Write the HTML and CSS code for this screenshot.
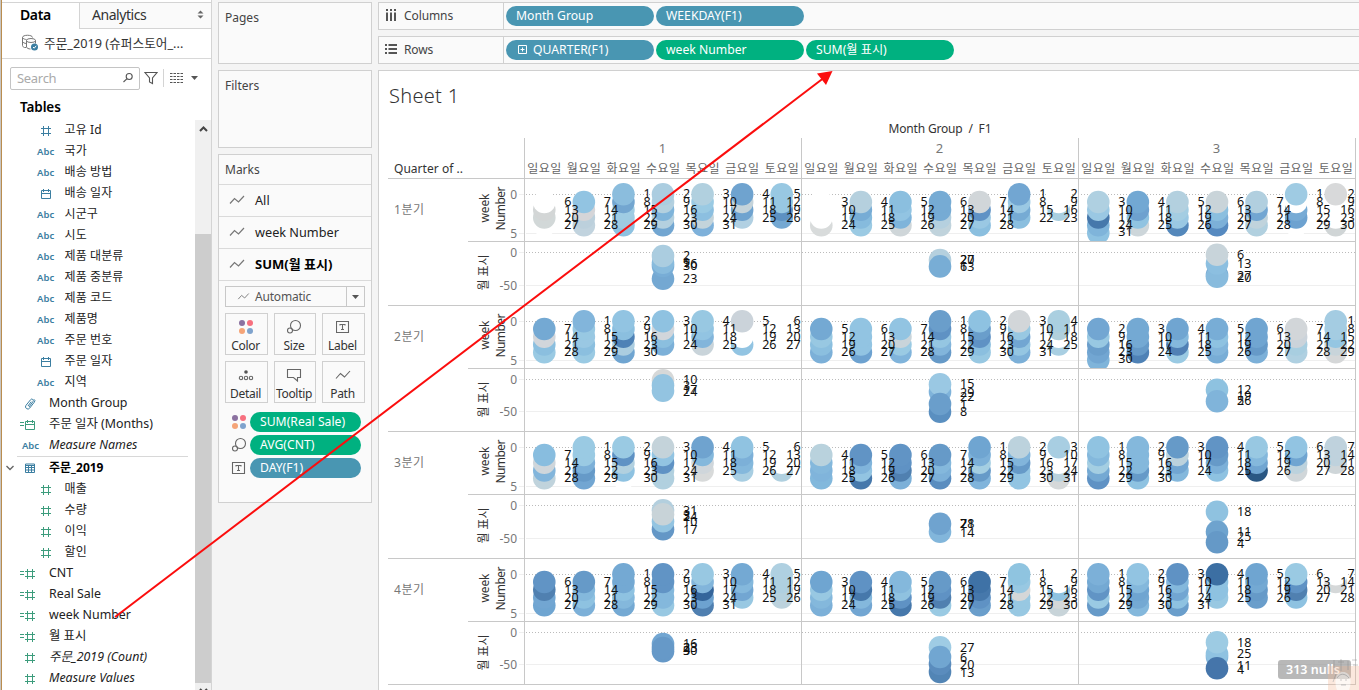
FILE: index.html
```html
<!DOCTYPE html>
<html lang="ko">
<head>
<meta charset="utf-8">
<title>Sheet 1</title>
<link rel="stylesheet" href="styles.css">
</head>
<body>
<svg class="defs" width="0" height="0">
  <symbol id="hash" viewBox="0 0 12 12"><path d="M3.500 1v10M8.500 1v10M1 3.500h10M1 8.500h10"/></symbol>
  <symbol id="cal" viewBox="0 0 12 12"><path d="M1.500 2.500h9v8h-9zM1.500 5.500h9M3.500 1v3M8.500 1v3"/></symbol>
  <symbol id="clip" viewBox="0 0 12 12"><path d="M5 9l4-5.500a1.500 1.500 0 0 0-2.400-1.800L2 7.300a2.300 2.300 0 0 0 3.700 2.800L10.300 4.200a2 2 0 0 0-.5-3M4 8l3.200-4.300"/></symbol>
  <symbol id="table" viewBox="0 0 12 12"><path d="M1.500 2h9v8.500h-9zM1.500 3.500h9M1.500 5.500h9M1.500 8h9M4.500 4v6M7.500 4v6"/></symbol>
  <symbol id="line" viewBox="0 0 16 12"><path d="M1 9.500l4.500-5 4 3.500L15 2"/></symbol>
  <symbol id="size" viewBox="0 0 16 16"><circle cx="9.500" cy="6.500" r="5"/><circle cx="4" cy="11.500" r="2.500"/></symbol>
  <symbol id="label" viewBox="0 0 14 14"><path d="M.5 1.500h12v11H.5zM4 5.500v-1h5v1M6.500 4.500v5M5 9.500h3"/></symbol>
  <symbol id="dots" viewBox="0 0 16 16"><circle cx="4" cy="4" r="3" fill="#8b71a0"/><circle cx="12" cy="4" r="3" fill="#f7707f"/><circle cx="4" cy="12" r="3" fill="#f5a478"/><circle cx="12" cy="12" r="3" fill="#7fa3cd"/></symbol>
</svg>

<div class="app">
  <aside class="data-pane">
    <div class="tabs">
      <div class="tab active">Data</div>
      <div class="tab"><span>Analytics</span>
        <svg width="7" height="9" viewBox="0 0 7 9"><path d="M.5 3.500L3.500.5l3 3zM.5 5.500l3 3 3-3z" fill="#666"/></svg>
      </div>
    </div>
    <div class="source">
      <svg width="18" height="18" viewBox="0 0 18 18" fill="none" stroke="#777"><path d="M5 13.500H3.500c-1-.3-2-1-2-2v-8c0-3 10-3 10 0M1.500 3.500c.5 1.500 3 2 4 2M1.500 7.500c.5 1 2 2 4 2"/><ellipse cx="10" cy="6.500" rx="4.500" ry="2"/><path d="M5.500 6.500v6.500c0 1 2 2 4 2M14.500 6.500v3"/><circle cx="13.500" cy="13" r="3.500" fill="#3b7ea1" stroke="none"/><path d="M12 13l1.200 1.200 2-2.400" stroke="#fff"/></svg>
      <span>주문_2019 (슈퍼스토어_...</span>
    </div>
    <div class="search-row">
      <div class="search"><span>Search</span>
        <svg width="12" height="12" viewBox="0 0 12 12" fill="none" stroke="#555" stroke-width="1.100"><circle cx="7.200" cy="4.500" r="3"/><path d="M4.800 6.800L1.500 10"/></svg>
      </div>
      <svg width="14" height="14" viewBox="0 0 14 14" fill="none" stroke="#555" stroke-width="1.100"><path d="M1 1.500h12L8.500 7v5.500l-3-1.500V7z"/></svg>
      <i class="rule"></i>
      <svg width="13" height="10" viewBox="0 0 13 10" stroke="#555" stroke-dasharray="2.500 1"><path d="M0 .5h13M0 3.500h13M0 6.500h13M0 9.500h13"/></svg>
      <svg class="caret" width="7" height="4" viewBox="0 0 7 4"><path d="M0 0h7L3.500 4z" fill="#555"/></svg>
    </div>
    <div class="tables-title">Tables</div>
    <div class="fields">
      <div class="field-list" id="fields"></div>
      <div class="scroll">
        <svg width="9" height="6" viewBox="0 0 9 6" fill="none" stroke="#444" stroke-width="2"><path d="M1 5l3.500-3.500L8 5"/></svg>
        <div class="thumb"></div>
        <svg class="down" width="9" height="6" viewBox="0 0 9 6" fill="none" stroke="#444" stroke-width="2"><path d="M1 1l3.500 3.500L8 1"/></svg>
      </div>
    </div>
  </aside>

  <section class="cards">
    <div class="card pages">Pages</div>
    <div class="card filters">Filters</div>
    <div class="card marks">
      <div class="marks-title">Marks</div>
      <div class="mark-row"><svg width="16" height="12"><use href="#line"/></svg>All</div>
      <div class="mark-row"><svg width="16" height="12"><use href="#line"/></svg>week Number</div>
      <div class="mark-row bold"><svg width="16" height="12"><use href="#line"/></svg>SUM(월 표시)</div>
      <div class="mark-body">
        <div class="select"><svg width="13" height="9"><use href="#line"/></svg><span>Automatic</span><i><svg width="7" height="4" viewBox="0 0 7 4"><path d="M0 0h7L3.500 4z" fill="#555"/></svg></i></div>
        <div class="buttons">
          <div class="button"><svg width="16" height="16"><use href="#dots"/></svg>Color</div>
          <div class="button"><svg class="st" width="16" height="16"><use href="#size"/></svg>Size</div>
          <div class="button"><svg class="st" width="14" height="16"><use href="#label"/></svg>Label</div>
          <div class="button"><svg class="st" width="16" height="16" viewBox="0 0 16 16"><circle cx="8" cy="5" r="1.800" fill="#555" stroke="none"/><circle cx="3" cy="11" r="1.700"/><circle cx="8" cy="11" r="1.700"/><circle cx="13" cy="11" r="1.700"/></svg>Detail</div>
          <div class="button"><svg class="st" width="16" height="16" viewBox="0 0 16 16"><path d="M1.500 2.500h13v8h-3v3.500l-4-3.500h-6z"/></svg>Tooltip</div>
          <div class="button"><svg class="st" width="16" height="16"><use href="#line"/></svg>Path</div>
        </div>
        <div class="enc"><svg width="16" height="16"><use href="#dots"/></svg><span class="pill green">SUM(Real Sale)</span></div>
        <div class="enc"><svg class="st" width="16" height="16"><use href="#size"/></svg><span class="pill green">AVG(CNT)</span></div>
        <div class="enc"><svg class="st" width="14" height="14"><use href="#label"/></svg><span class="pill blue">DAY(F1)</span></div>
      </div>
    </div>
  </section>

  <main class="work">
    <div class="shelf">
      <div class="shelf-name"><svg width="12" height="13" viewBox="0 0 12 13" fill="#555"><path d="M1 0h2v2H1zM5 0h2v2H5zM9 0h2v2H9zM1 3.500h2V12H1zM5 3.500h2V12H5zM9 3.500h2V12H9z"/></svg>Columns</div>
      <div class="pills"><span class="pill blue">Month Group</span><span class="pill blue">WEEKDAY(F1)</span></div>
    </div>
    <div class="shelf">
      <div class="shelf-name"><svg width="12" height="13" viewBox="0 0 12 13" fill="#555"><path d="M0 1h2v2H0zM0 5h2v2H0zM0 9h2v2H0zM3.500 1H12v2H3.500zM3.500 5H12v2H3.500zM3.500 9H12v2H3.500z"/></svg>Rows</div>
      <div class="pills"><span class="pill blue plus"><svg width="9" height="9" viewBox="0 0 9 9" fill="none" stroke="#fff"><path d="M.5.5h8v8h-8zM2.500 4.500h4M4.500 2.500v4"/></svg>QUARTER(F1)</span><span class="pill green">week Number</span><span class="pill green">SUM(월 표시)</span></div>
    </div>
    <div class="sheet">
      <h1>Sheet 1</h1>
      <svg class="chart" id="chart" width="979" height="572" viewBox="379 118 979 572"></svg>
    </div>
  </main>
</div>

<svg class="arrow" width="1359" height="690" viewBox="0 0 1359 690"><path d="M115 617L823 78.500" stroke="#fb0d0d" stroke-width="2"/><path d="M832.500 71L826 85 817 73.500z" fill="#fb0d0d"/></svg>
<div class="nulls">313 nulls</div>
<svg class="stamp" width="31" height="32" viewBox="0 0 31 32"><path d="M0 8h31v24H0z" fill="#f3b690" opacity=".5"/><path d="M9 32c-3-8-2-18 6-18s9 10 6 18z" fill="#fff" opacity=".7"/><path d="M6 2v8M10 4h6M13 1v12M20 3v9M24 2h5M25 7h5M9 20c3-5 8-5 12 0M12 22h2M17 22h2M13 27h5M8 16l-3 8" fill="none" stroke="#888" opacity=".7"/></svg>
<script src="app.js"></script>
</body>
</html>
```

FILE: styles.css
```css
* { box-sizing: border-box; }
body { margin: 0; width: 1359px; height: 690px; overflow: hidden; position: relative; background: #f4f4f4; font: 12px "Noto Sans", "Noto Sans CJK KR", sans-serif; color: #333; }
svg { flex: none; }
.defs { position: absolute; }
.app { display: flex; height: 690px; padding-left: 1px; border-left: 1px solid #c9c6c2; background: linear-gradient(#b98d4f, #b98d4f) 0 0 / 1px 100% no-repeat; }

.data-pane { width: 210px; height: 690px; padding-top: 2px; background: #fff; border-right: 1px solid #d4d4d4; display: flex; flex-direction: column; }
.tabs { display: flex; height: 27px; flex: none; border-top: 1px solid #d4d4d4; font-size: 14px; line-height: 24px; }
.tab { flex: 1; display: flex; align-items: center; justify-content: space-between; padding: 0 7px 2px 12px; background: #fafafa; border-left: 1px solid #d4d4d4; border-bottom: 1px solid #d4d4d4; }
.tab.active { flex: none; width: 77px; padding-left: 18px; background: #fff; border: 0; font-weight: 600; color: #000; letter-spacing: -.4px; }
.tab span { letter-spacing: -.45px; }
.source { display: flex; align-items: center; gap: 5px; height: 30px; flex: none; padding: 0 0 2px 19px; border-bottom: 1px solid #d8d8d8; font-size: 12.700px; white-space: nowrap; }
.search-row { display: flex; align-items: center; height: 38px; flex: none; padding-left: 8px; }
.search { display: flex; align-items: center; justify-content: space-between; width: 130px; height: 23px; margin-right: 4px; padding: 0 5px 0 6px; border: 1px solid #c4c4c4; border-radius: 2px; font-size: 13px; letter-spacing: -.3px; color: #aaa; }
.rule { width: 1px; height: 18px; margin: 0 6px 0 5px; background: #d4d4d4; }
.caret { margin-left: 8px; }
.tables-title { flex: none; height: 23px; padding-left: 18px; font: 600 13.500px/20px "Noto Sans"; color: #000; letter-spacing: -.1px; }
.fields { display: flex; flex: 1; min-height: 0; overflow: hidden; }
.field-list { width: 193px; }
.field { display: flex; align-items: center; height: 21px; padding: 0 0 1px 47px; font-size: 12.400px; line-height: 18px; color: #222; white-space: nowrap; position: relative; }
.field.deep { padding-left: 62.500px; font-size: 12px; letter-spacing: .1px; }
.field .ico { display: flex; align-items: center; justify-content: flex-end; width: 29px; margin: 1px 10px 0 -39px; color: #3b7ea1; font: 600 9.500px "Noto Sans"; }
.field .ico svg { fill: none; stroke: currentColor; }
.field .ico.measure { color: #3c9c7c; }
.field.italic { font-style: italic; }
.field.group { height: 23px; padding-top: 1px; font-size: 12px; font-weight: 700; color: #000; }
.field.group::before { content: ""; position: absolute; left: 15px; top: 0; width: 171px; height: 1px; background: #d8d8d8; }
.field.group .ico { width: 33px; margin-left: -43px; justify-content: space-between; }
.scroll { width: 16px; display: flex; flex-direction: column; align-items: center; background: #f0f0f0; }
.scroll svg { margin: 6px 0 102px; }
.scroll .thumb { width: 16px; height: 449px; flex: none; background: #cdcdcd; }
.scroll .down { margin: 5px 0 0; }

.cards { width: 154px; margin: 2px 6px 0 6px; display: flex; flex-direction: column; gap: 6px; }
.card { background: #fafafa; border: 1px solid #d0d0d0; padding: 6px; font-size: 12px; color: #444; }
.pages { height: 62px; }
.filters { height: 78px; }
.marks { height: 349px; padding: 0; }
.marks-title { height: 29px; padding: 6px; }
.mark-row { display: flex; align-items: center; gap: 10px; height: 32px; padding: 0 0 2px 10px; border-top: 1px solid #dadada; font-size: 12.700px; color: #222; }
.mark-row svg, .select svg { fill: none; stroke: #777; stroke-width: 1.200; }
.mark-row.bold { font-weight: 700; color: #000; font-size: 13px; }
.mark-body { border-top: 1px solid #dadada; padding: 5px 6px; }
.select { display: flex; align-items: center; height: 21px; padding-left: 11px; gap: 5px; border: 1px solid #c8c8c8; color: #555; letter-spacing: -.2px; }
.select i { display: flex; align-items: center; justify-content: center; width: 18px; height: 19px; margin-left: auto; border-left: 1px solid #c8c8c8; }
.select i svg { stroke: none; }
.buttons { display: grid; grid-template-columns: 43px 42px 43px; gap: 6px; margin-top: 6px; }
.button { display: flex; flex-direction: column; align-items: center; height: 42px; padding: 5px 2px 0 0; gap: 3px; border: 1px solid #d0d0d0; font-size: 12px; line-height: 16px; letter-spacing: -.3px; color: #333; }
.st { fill: none; stroke: #666; stroke-width: 1.100; }
.enc { display: flex; align-items: center; gap: 3px; height: 23px; padding-left: 6px; }
.buttons + .enc { margin-top: 7px; }
.enc svg { width: 16px; }
.enc .pill { width: 111px; }
.pill { display: flex; align-items: center; gap: 7px; width: 148px; height: 20px; padding: 0 0 1px 10px; border-radius: 10px; color: #fff; font-size: 12.200px; line-height: 17px; white-space: nowrap; }
.pill.plus { padding-left: 12px; gap: 6px; }
.blue { background: #4996b2; }
.green { background: #00b180; }

.work { flex: 1; padding-top: 2px; display: flex; flex-direction: column; gap: 6px; }
.shelf { display: flex; height: 28px; flex: none; border: 1px solid #d0d0d0; border-right: 0; background: #fafafa; }
.shelf-name { display: flex; align-items: center; gap: 7px; width: 125px; padding: 0 0 1px 6px; border-right: 1px solid #d0d0d0; color: #444; letter-spacing: -.1px; }
.pills { display: flex; align-items: center; gap: 2px; padding-left: 2px; }
.sheet { flex: 1; background: #fff; border: 1px solid #d0d0d0; border-width: 1px 0 0 1px; }
.sheet h1 { margin: 0; height: 47px; padding: 10px 0 0 10px; font: 300 20px/30px "Noto Sans", "Open Sans"; letter-spacing: .3px; color: #333; }
.chart { display: block; font-size: 12px; }
.axis { fill: #777; text-anchor: end; }
.day { fill: #111; font-size: 12.500px; }
.weekday { fill: #666; font-size: 12px; text-anchor: middle; }
.head { fill: #333; text-anchor: middle; }
.sub { fill: #777; text-anchor: middle; }
.quarter { fill: #777; }
.title { fill: #333; }
.border { stroke: #c8c8c8; }
.zero { stroke: #bbb; stroke-dasharray: 1 2; }
.grid { stroke: #efefef; }

.arrow { position: absolute; left: 0; top: 0; }
.nulls { position: absolute; left: 1278px; top: 660px; width: 73px; height: 19px; padding-left: 8px; border-radius: 3px; background: rgba(150,150,150,.68); color: #fff; font: 600 12.500px/19px "Noto Sans"; }
.stamp { position: absolute; left: 1328px; top: 658px; opacity: .6; }
```

FILE: app.js
```js
// Field list: kind, label, options
const fields = [
  ['hash', '고유 Id', 'deep'], ['abc', '국가', 'deep'], ['abc', '배송 방법', 'deep'], ['cal', '배송 일자', 'deep'],
  ['abc', '시군구', 'deep'], ['abc', '시도', 'deep'], ['abc', '제품 대분류', 'deep'], ['abc', '제품 중분류', 'deep'],
  ['abc', '제품 코드', 'deep'], ['abc', '제품명', 'deep'], ['abc', '주문 번호', 'deep'], ['cal', '주문 일자', 'deep'],
  ['abc', '지역', 'deep'], ['clip', 'Month Group', ''], ['cal', '주문 일자 (Months)', 'calc measure'], ['abc', 'Measure Names', 'italic'],
  ['table', '주문_2019', 'group'], ['hash', '매출', 'deep measure'], ['hash', '수량', 'deep measure'], ['hash', '이익', 'deep measure'],
  ['hash', '할인', 'deep measure'], ['hash', 'CNT', 'calc measure'], ['hash', 'Real Sale', 'calc measure'], ['hash', 'week Number', 'calc measure'],
  ['hash', '월 표시', 'calc measure'], ['hash', '주문_2019 (Count)', 'italic measure'], ['hash', 'Measure Values', 'italic measure']
];
document.getElementById('fields').innerHTML = fields.map(([kind, name, opt]) => {
  let icon = kind === 'abc' ? 'Abc' : `<svg width="12" height="12"><use href="#${kind}"/></svg>`;
  if (opt.includes('calc')) icon = '<svg width="4" height="5"><path d="M0 .5h4M0 3.500h4"/></svg>' + icon;
  if (opt.includes('group')) icon = '<svg width="8" height="6"><path d="M.5 1l3.500 3.500L7.500 1" stroke="#666" stroke-width="1.400"/></svg>' + icon;
  const row = opt.replace('measure', '').replace('calc', '');
  const pad = kind === 'abc' ? 0 : 3;
  return `<div class="field ${row}"><span class="ico ${opt.includes('measure') ? 'measure' : ''}" style="padding-right:${pad}px">${icon}</span>${name}</div>`;
}).join('');

// Colours of the marks, per quarter, month and weekday, from the first week of that weekday down
const weeks = [
  [['ffffff d3d6d6 d2d8d8 ffffff', '92c4e2 d5d5d8 bcd0dc c1d3de', '8bbddd 73a6d0 9fcce3 9fcae2 8ec2e1', 'abcde0 b3d0df 7fb4da b4d0df 72a6d1', 'b1d0df 9acae3 8cbfe0 c4d4db 7eb1da', '6fa3cf c4d3da 6fa3cf b1d0e2', '98c8e2 98c8e2 5d91c2 74a8d2'],
   ['ffffff ffffff ffffff d8dbdb', 'b5d0de 77acd5 86bbdd 9bcae3', '8bbfdf 92c4e2 7fb4da cfd6d9', '76abd4 76abd4 b5d0df c0d3dc', 'd1d6d9 5f92c5 9ac8e3 8bbfdf', '72a6d2 9ac8e3 76abd4 8bbfdf', 'ffffff ffffff a9cfe0 ffffff'],
   ['afd0e1 9ac8e3 4678ab 7fb4da 8ec2e1', '72a8d3 6ea1cf 90c3e1 cdd6da', 'b3d0df a4cde2 9ac8e3 5488bb', 'c9d4d9 8bbfdf 7cb0d8 568ac0', 'b1cfdf 72a6d2 c0d3dc b1d0df', '9fcbe3 ffffff 77abd5 6da2d0 ffffff', 'd8d9da ffffff ffffff ffffff d0d5d6']],
  [['74a9d3 d2d6db 8bbfdf 9acae3', '82b5db 98c8e2 9ac8e3 8bbfdf 9acae3', '92c4e2 8bbfdf 4f82b6 abcde0 70a5d1', '8fc2e1 d2d6db 8bbfdf 7cb0d8', '98c8e2 92c4e2 82b5db c9d4da', 'cbd3da ffffff ffffff 92c4e2', 'ffffff ffffff ffffff ffffff'],
   ['74a9d3 98c8e2 8bbfdf 7cb0d8', '92c4e2 92c4e2 92c4e2 6da2d0', '92c4e2 c9d4da 9acae3 80b4db', '6a9ecb 5f92c4 95c6e2 82b5db 669ac8', '8ec2e1 6a9ecb 5f92c4 8bbfdf 98c8e2', 'd2d6d9 98c8e2 72a6d2 95c6e2 7cb0d8', 'aacfe0 b1d0dc ffffff a9cfe2'],
   ['72a6d2 98c8e2 6a9ecb 72a6d2 7fb4da', '74a9d3 74a9d3 669ac8 4f82b6', '70a5d1 84b8dc 5080b5 9acae3', '78add6 8ec2e1 82b5db 78add6', '70a5d1 70a5d1 669ac8 7cb0d8', 'd2d6d9 cbd3da a8cee0 afd0e1', 'a4cce2 a4cce2 95c6e2 c8d4da d5d7d8']],
  [['88bddf cfd6db 82b5db c0d3dc', '9acae3 9acae3 7cb0d8 669ac8 72a6d2', '9acae3 5f92c4 b1d0df 8ec2e1 ffffff', 'c4d3da 92c4e2 5f92c4 b1d0df b1d0df', '6fa3cf 84b8dc cfd6db d8dada', '90c3e1 7cb0d8 84b8dc a8cee2', 'ffffff ffffff ffffff b0d0df'],
   ['b9d2dd 84b8dc 80b4db 82b8dc', '6194c5 80b4db 92c4e2 4678ab', '6194c5 5f92c4 5080b0 7cb0d8', '669ac8 84b8dc 7cb0d8 5a8dbf', '6fa5d1 7cb0d8 a4cee2 669ac8 80b4db', 'bcd2dd 82b5db 669ac8 92c4e2 92c4e2', 'a8cee2 ffffff ffffff b9d2dd d5d8d9'],
   ['90c3e1 84b8dc a4cee2 74a9d3 5f92c4', '84b8dc 84b8dc 84b8dc 669ac8 8ec2e1', '669ac8 bcd2dd 72a6d2 84b8dc', '6194c5 669ac8 7cb0d8 8ec2e1', '98c8e2 84b8dc 70a5d1 2a5783', '92c4e2 70a5d1 bcd2dd d0d6d9', 'bfd2dd bfd2dd cfd6d9 ffffff']],
  [['6194c5 5080b0 72a6d2 6fa5d1', '669ac8 84b8dc 8ec2e1 7cb0d8', '74a9d3 74a9d3 8ec2e1 84b8dc 74a9d3', '6194c5 6194c5 84b8dc 84b8dc 98c8e2', '98c8e2 82b5db 34659b 6da2d0 4f7fb0', '74a9d3 84b8dc 72a6d2 98c8e2', 'afd0e1 afd0e1 b5d1de bcd2dd'],
   ['6fa5d1 98c8e2 84b8dc 7cb0d8', '5f92c4 4678ab 84b8dc 72a6d2', '84b8dc 8fc2e0 5f92c4 4678ab', '669ac8 5f92c4 5080b0 9acae3', '3f72a6 4678ab 5f92c4 6a9ecb', '8fc4e0 98c8e2 d5d7d8 98c8e2 98c8e2', 'ffffff ffffff 8ec2e1 d5d8d9 c8d4d9'],
   ['7cb0d8 74a9d3 6194c5 9acae3 669ac8', '92c4e2 84b8dc 6fa5d1 74a9d3 84b8dc', '5f92c4 84b8dc 72a6d2 8ec2e1 6a9ecb', '3c6fa3 8ec2e1 8ec2e1 98c8e2', '6fa5d1 74a9d3 669ac8 6a9ecb', '9acae3 5f92c4 5080b0 8ec2e1', 'ffffff d5d8d9 ffffff ffffff']]
];
// Lower panes: [marks as y,colour in drawing order], [labels as day,y]
const months = [
  [[[[278.7, '74a8d2'], [266, '78add6'], [262.7, '88bbdd'], [256, 'abcde0']], [[2, 255], [9, 262], [16, 263.5], [30, 265.5], [23, 278.5]]],
   [[[260, 'b5d0de'], [266.4, '78add5']], [[20, 259.3], [27, 259.8], [6, 266.5], [13, 266.7]]],
   [[[275, '70a5d1'], [276.7, '88bbdd'], [263.5, '8cbfe0'], [254.7, 'c8d4da']], [[6, 254.7], [13, 263.5], [27, 275], [20, 277.5]]]],
  [[[[380.3, 'd6d8d8'], [385.3, '93c4e1'], [390.7, '93c4e1']], [[10, 379.5], [3, 385], [17, 389.5], [24, 391]]],
   [[[411.7, '5a8fc0'], [392, '7fb3da'], [384.3, '9ac8e3'], [404, '6a9ecb']], [[15, 383.5], [29, 392], [22, 396], [1, 404], [8, 411.7]]],
   [[[389.7, '8ec2e0'], [401.3, '80b4da']], [[12, 389], [19, 395.5], [5, 400], [26, 400.5]]]],
  [[[[529.3, '6497c6'], [521.3, '93c4e1'], [510.3, 'b3cfde'], [514.3, 'c8d3d8']], [[31, 510.7], [3, 515], [24, 516], [10, 521], [17, 529]]],
   [[[531.7, '82b6db'], [523.7, '6fa3cf']], [[7, 523], [21, 523.5], [28, 523.7], [14, 532]]],
   [[[511.7, '8fc2e0'], [531.7, '6ea3ce'], [542.3, '6599c7']], [[18, 511.7], [11, 531.7], [25, 536], [4, 543]]]],
  [[[[644, '72a6d2'], [651.3, '6699c8'], [648, '6699c8']], [[16, 643], [2, 647], [23, 647.5], [9, 650], [30, 650.5]]],
   [[[672, '5285b5'], [664, '5a8cbd'], [647.3, '9fcce4'], [657, '71a6d1']], [[27, 647.5], [6, 657], [20, 664], [13, 672.5]]],
   [[[657, '82b5dc'], [654, '8fc2e1'], [642.3, '9dcbe3'], [668.3, '4575aa']], [[18, 642.5], [25, 653.7], [11, 665], [4, 669]]]]
];

const X = [524.5, 801.5, 1078.5, 1355.5], STEP = 277 / 7, R = 11.3;
const rows = [
  { top: 178.5, mid: 241.5, end: 305.5, w0: 194.5, w5: 233.5, m0: 252.5, m50: 285.5 },
  { top: 305.5, mid: 368.5, end: 431.5, w0: 321.5, w5: 360.5, m0: 379.5, m50: 411.5 },
  { top: 431.5, mid: 494.5, end: 558.5, w0: 447.5, w5: 486.5, m0: 505.5, m50: 538.5 },
  { top: 558.5, mid: 621.5, end: 684.5, w0: 574.5, w5: 613.5, m0: 632.5, m50: 664.5 }
];
const out = [];
const line = (x1, y1, x2, y2, c) => out.push(`<line class="${c}" x1="${x1}" y1="${y1}" x2="${x2}" y2="${y2}"/>`);
const text = (x, y, s, c, extra = '') => out.push(`<text class="${c}" x="${x}" y="${y}" ${extra}>${s}</text>`);
const dot = (x, y, c, clip) => out.push(`<circle cx="${x}" cy="${y}" r="${R}" fill="#${c}" ${clip || ''}/>`);

text(940, 133, 'Month Group &#160;/ &#160;F1', 'head', 'textLength="103"');
text(394, 173, 'Quarter of ..', 'title', 'textLength="69"');
for (let m = 0; m < 3; m++) {
  text(X[m] + 138, 153, m + 1, 'sub', 'font-size="13"');
  [...'일월화수목금토'].forEach((d, i) => text(X[m] + STEP * (i + .5), 173, d + '요일', 'weekday', 'textLength="34"'));
}

rows.forEach((r, q) => {
  out.push(`<clipPath id="pane${q}"><rect x="524" y="${r.top}" width="832" height="${r.mid - r.top}"/></clipPath>`);
  text(394, r.top + 35.5, `${q + 1}분기`, 'quarter', 'textLength="30"');
  [[r.w0, '0', 'zero'], [r.w5, '5', 'grid'], [r.m0, '0', 'zero'], [r.m50, '-50', 'grid']].forEach(([y, s, c]) => {
    text(517, y + 4.5, s, 'axis');
    line(519, y, 524, y, 'grid');
    line(526, y, 1355, y, c);
  });
  const side = (x, y, s, len) => text(x, y, s, 'head', `transform="rotate(-90 ${x} ${y})" textLength="${len}"`);
  side(488.500, r.top + 29.5, 'week', 29);
  side(505, r.top + 30, 'Number', 44);
  side(488, r.mid + 31, '월 표시', 36);

  for (let m = 0; m < 3; m++) {
    const month = q * 3 + m;
    const first = new Date(2019, month, 1).getDay();
    const last = new Date(2019, month + 1, 0).getDate();
    const labels = [];
    for (let d = 0; d < 7; d++) {
      const colours = weeks[q][m][d].split(' ');
      const start = d < first ? 1 : 0;
      const cx = X[m] + STEP * (d + .5);
      for (let i = colours.length - 1; i >= 0; i--) {
        const w = start + i;
        dot(cx, r.w0 - .2 + 7.75 * w, colours[i], `clip-path="url(#pane${q})"`);
      }
      for (let w = 0; w < 6; w++) {
        const day = w * 7 + d - first + 1;
        if (day < 1 || day > last) continue;
        const y = Math.min(r.w0 + 3.900 + 7.75 * w, r.mid - 5.5);
        labels.push(d === 6 ? [X[m + 1] - .9, y, day, 'text-anchor="end"'] : [cx + 20, y, day, '']);
      }
    }
    labels.forEach(([x, y, s, e]) => text(x, y, s, 'day', e));
    const [marks, tags] = months[q][m];
    const cx = X[m] + STEP * 3.5;
    marks.forEach(([y, c]) => dot(cx, y, c));
    tags.forEach(([s, y]) => text(cx + 20, y + 4.5, s, 'day'));
  }
  line(388, r.top, 1356, r.top, 'border');
  line(468, r.mid, 1356, r.mid, 'border');
});
line(388, 684.5, 1356, 684.5, 'border');
X.forEach(x => line(x, 138, x, 684, 'border'));
document.getElementById('chart').innerHTML = out.join('');
```
